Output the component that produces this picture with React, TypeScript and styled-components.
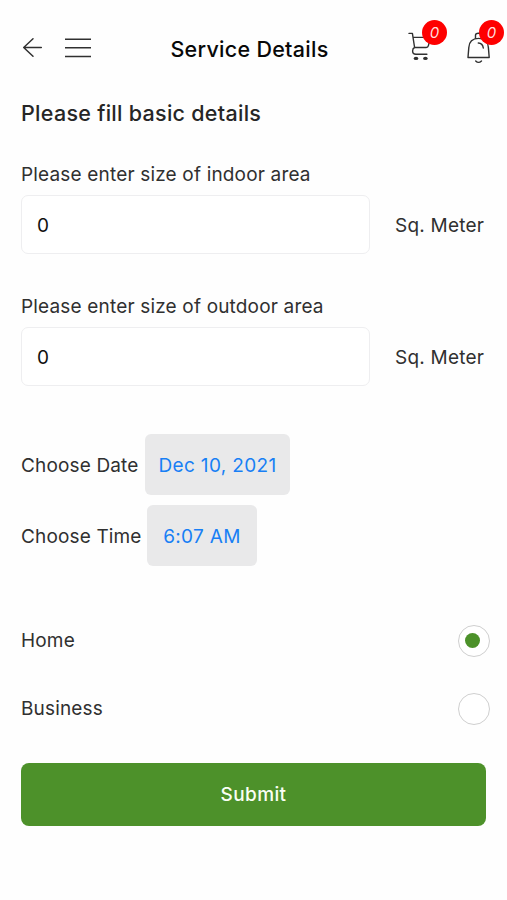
import React, { useState } from "react";
import styled, { createGlobalStyle } from "styled-components";

const GlobalStyle = createGlobalStyle`
  *, *::before, *::after { box-sizing: border-box; }
  body { margin: 0; background: #fefefe; }
  button, input { font: inherit; letter-spacing: inherit; }
`;

const Screen = styled.main`
  width: 507px;
  height: 900px;
  overflow: hidden;
  background: #fefefe;
  color: #303030;
  font-family: Inter, "Liberation Sans", sans-serif;
  font-size: 19px;
  line-height: 24px;
  letter-spacing: 0.17px;
  white-space: nowrap;
`;

const Header = styled.header`
  display: grid;
  grid-template-columns: 146px 1fr 154px;
  align-items: center;
  height: 96px;
`;

const HeaderLeft = styled.div`
  display: flex;
  align-items: center;
  gap: 22px;
  padding-left: 22px;
`;

const HeaderRight = styled.div`
  display: flex;
  gap: 19px;
  justify-content: flex-end;
  padding: 0 3px 10px 0;
`;

const IconButton = styled.button`
  position: relative;
  display: block;
  padding: 0;
  border: 0;
  background: none;
  color: #303030;
  svg { display: block; }
`;

const Title = styled.h1`
  margin: 1px 0 0;
  text-align: center;
  color: #080808;
  font-size: 21.5px;
  font-weight: 500;
  letter-spacing: 0.28px;
`;

const Badge = styled.span`
  position: absolute;
  top: 0;
  right: 0;
  width: 25px;
  height: 25px;
  border-radius: 50%;
  background: #fe0000;
  color: #ffdede;
  font-size: 15px;
  font-style: italic;
  line-height: 25px;
  text-align: center;
  letter-spacing: 0;
`;

const Form = styled.form`
  padding: 5px 17px 0 21px;
`;

const Heading = styled.h2`
  margin: 0 0 38px;
  color: #262626;
  font-size: 21.5px;
  font-weight: 500;
  letter-spacing: 0.28px;
`;

const Field = styled.label`
  display: block;
  margin-bottom: 41px;
`;

const FieldRow = styled.span`
  display: flex;
  align-items: center;
  gap: 25px;
  margin-top: 8px;
`;

const Unit = styled.span`
  padding-top: 2px;
  letter-spacing: 0.22px;
`;

const AreaInput = styled.input`
  width: 349px;
  height: 59px;
  padding: 2px 15px 0;
  border: 1px solid #eeeef0;
  border-radius: 7px;
  outline: 0;
  background: #fff;
  color: #101010;
`;

const Schedule = styled.div`
  display: grid;
  gap: 10px;
  margin-top: 48px;
`;

const PickerRow = styled.div`
  display: flex;
  align-items: center;
  height: 61px;
`;

const PickerLabel = styled.span<{ $width: number }>`
  width: ${(p) => p.$width}px;
  padding-top: 3px;
  letter-spacing: 0.15px;
`;

const Picker = styled.button<{ $width: number }>`
  width: ${(p) => p.$width}px;
  height: 61px;
  padding: 3px 0 0;
  border: 0;
  border-radius: 6px;
  background: #e9e9ea;
  color: #187ff5;
  letter-spacing: 0.35px;
`;

const Options = styled.div`
  display: grid;
  gap: 36px;
  margin-top: 59px;
`;

const Option = styled.label`
  display: flex;
  align-items: center;
  justify-content: space-between;
  height: 32px;
`;

const Radio = styled.input`
  appearance: none;
  display: grid;
  place-items: center;
  width: 32px;
  height: 32px;
  margin: 0;
  padding: 0 3px 2px 0;
  border: 1px solid #cfcfcf;
  border-radius: 50%;
  background: #fff;
  &:checked::before {
    content: "";
    width: 15px;
    height: 15px;
    border-radius: 50%;
    background: #4c912a;
  }
`;

const Submit = styled.button`
  display: block;
  width: 465px;
  height: 63px;
  margin-top: 38px;
  padding: 0;
  border: 0;
  border-radius: 8px;
  background: #4d912a;
  color: #fafff5;
  font-weight: 500;
  letter-spacing: 0.4px;
`;

const BackIcon = () => (
  <svg width="21" height="22" viewBox="0 0 21 22" fill="none" stroke="currentColor" strokeWidth="1.5" strokeLinecap="round" strokeLinejoin="round">
    <path d="M19.3 10.5H1.7M11 1.8L1.7 10.5l9.3 8.8" />
  </svg>
);

const MenuIcon = () => (
  <svg width="26" height="20" viewBox="0 0 26 20" fill="none" stroke="currentColor" strokeWidth="1.5">
    <path d="M0 1.3h26M0 9.8h26M0 18.6h26" />
  </svg>
);

const CartIcon = () => (
  <svg width="39" height="46" viewBox="0 0 39 46" fill="none" stroke="currentColor" strokeWidth="1.4" strokeLinecap="round" strokeLinejoin="round">
    <path d="M1 13.4h3.4l2.2 14.1h11.6q1.8 0 2.2-1.8l2-8.3H5.1M6.6 27.5q-2 .9-2 3.6 0 3.2 3.3 3.2h11" />
    <ellipse cx="8" cy="38.4" rx="2.3" ry="1.6" fill="currentColor" stroke="none" />
    <ellipse cx="17.4" cy="38.4" rx="2.3" ry="1.6" fill="currentColor" stroke="none" />
  </svg>
);

const BellIcon = () => (
  <svg width="38" height="46" viewBox="0 0 38 46" fill="none" stroke="currentColor" strokeWidth="1.4" strokeLinecap="round" strokeLinejoin="round">
    <path d="M9.5 18.8V15.3q0-2 3-2 3.2 0 3.2 2v3.5M2 37.5h21.2L22.4 27.6Q22 18.5 12.6 18.4 3.3 18.5 2.8 27.6ZM12.3 23q4.4.2 5 5M9.7 40.9q2.8 3 5.8 0" />
  </svg>
);

const areas = ["indoor", "outdoor"];
const places = ["Home", "Business"];

export default function App() {
  const [sizes, setSizes] = useState<Record<string, string>>({ indoor: "0", outdoor: "0" });
  const [place, setPlace] = useState("Home");

  return (
    <Screen>
      <GlobalStyle />
      <Header>
        <HeaderLeft>
          <IconButton aria-label="Back"><BackIcon /></IconButton>
          <IconButton aria-label="Menu"><MenuIcon /></IconButton>
        </HeaderLeft>
        <Title>Service Details</Title>
        <HeaderRight>
          <IconButton aria-label="Cart"><CartIcon /><Badge>0</Badge></IconButton>
          <IconButton aria-label="Notifications"><BellIcon /><Badge>0</Badge></IconButton>
        </HeaderRight>
      </Header>
      <Form onSubmit={(e) => e.preventDefault()}>
        <Heading>Please fill basic details</Heading>
        {areas.map((area) => (
          <Field key={area}>
            Please enter size of {area} area
            <FieldRow>
              <AreaInput
                inputMode="numeric"
                value={sizes[area]}
                onChange={(e) => setSizes({ ...sizes, [area]: e.target.value })}
              />
              <Unit>Sq. Meter</Unit>
            </FieldRow>
          </Field>
        ))}
        <Schedule>
          <PickerRow>
            <PickerLabel $width={124}>Choose Date</PickerLabel>
            <Picker type="button" $width={145}>Dec 10, 2021</Picker>
          </PickerRow>
          <PickerRow>
            <PickerLabel $width={126}>Choose Time</PickerLabel>
            <Picker type="button" $width={110}>6:07 AM</Picker>
          </PickerRow>
        </Schedule>
        <Options role="radiogroup">
          {places.map((name) => (
            <Option key={name}>
              {name}
              <Radio type="radio" name="place" checked={place === name} onChange={() => setPlace(name)} />
            </Option>
          ))}
        </Options>
        <Submit type="submit">Submit</Submit>
      </Form>
    </Screen>
  );
}
